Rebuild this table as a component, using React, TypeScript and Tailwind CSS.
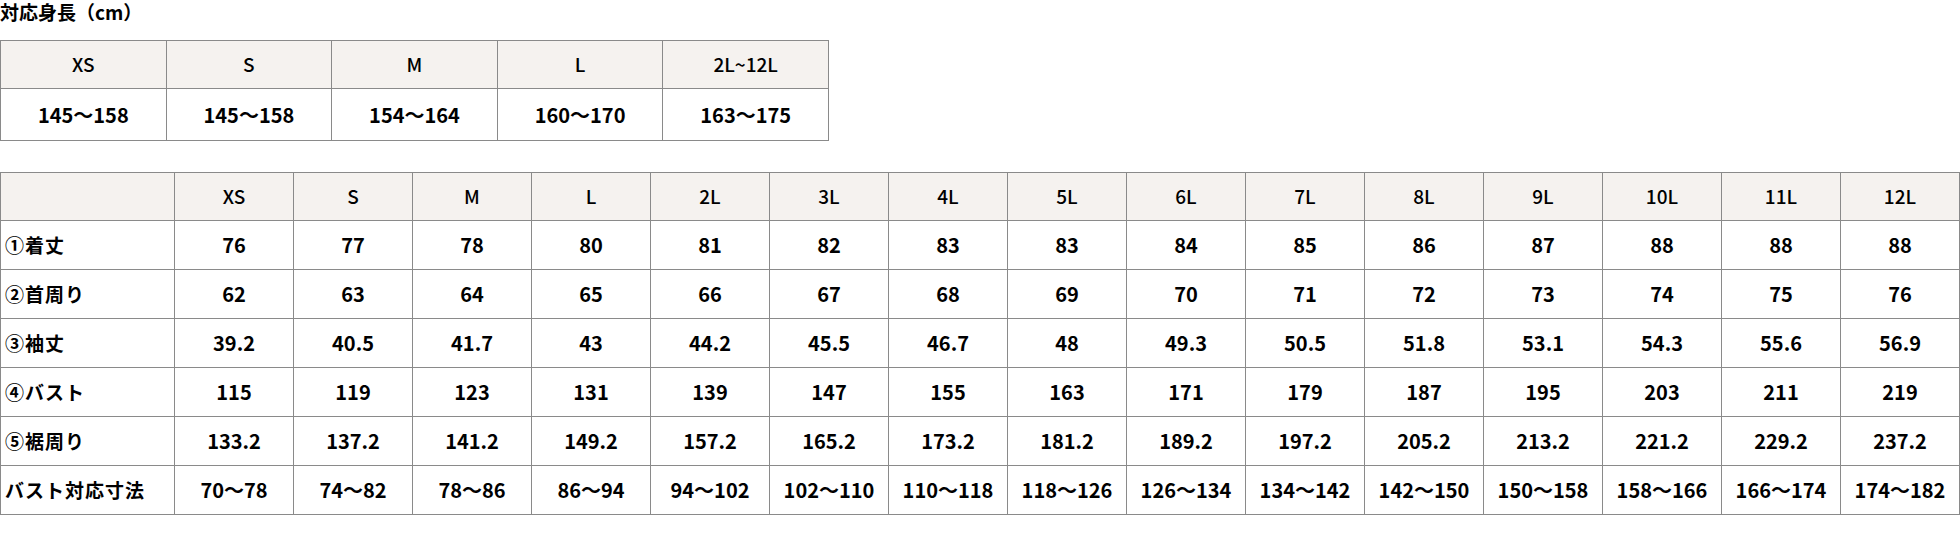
const heightSizes = ["XS", "S", "M", "L", "2L~12L"];
const heightRanges = ["145〜158", "145〜158", "154〜164", "160〜170", "163〜175"];

const sizes = ["XS", "S", "M", "L", "2L", "3L", "4L", "5L", "6L", "7L", "8L", "9L", "10L", "11L", "12L"];

const rows: { label: string; values: string[] }[] = [
    { label: "①着丈", values: ["76", "77", "78", "80", "81", "82", "83", "83", "84", "85", "86", "87", "88", "88", "88"] },
    { label: "②首周り", values: ["62", "63", "64", "65", "66", "67", "68", "69", "70", "71", "72", "73", "74", "75", "76"] },
    { label: "③袖丈", values: ["39.2", "40.5", "41.7", "43", "44.2", "45.5", "46.7", "48", "49.3", "50.5", "51.8", "53.1", "54.3", "55.6", "56.9"] },
    { label: "④バスト", values: ["115", "119", "123", "131", "139", "147", "155", "163", "171", "179", "187", "195", "203", "211", "219"] },
    { label: "⑤裾周り", values: ["133.2", "137.2", "141.2", "149.2", "157.2", "165.2", "173.2", "181.2", "189.2", "197.2", "205.2", "213.2", "221.2", "229.2", "237.2"] },
    { label: "バスト対応寸法", values: ["70〜78", "74〜82", "78〜86", "86〜94", "94〜102", "102〜110", "110〜118", "118〜126", "126〜134", "134〜142", "142〜150", "150〜158", "158〜166", "166〜174", "174〜182"] },
];

const font = "font-['Noto_Sans_CJK_JP','Noto_Sans',sans-serif]";

export default function App() {
    return (
        <div className={`w-[1960px] h-[540px] bg-white text-black ${font}`}>
            <div className="h-[24px] text-[19px] leading-[24px] font-bold">対応身長（cm）</div>

            <table className="mt-[16px] w-[829px] table-fixed border-collapse">
                <tbody>
                    <tr className="h-[48px] bg-[#f5f2ef]">
                        {heightSizes.map((s, i) => (
                            <td key={i} className="border border-[#8a8a8a] text-center text-[19px] font-medium">{s}</td>
                        ))}
                    </tr>
                    <tr className="h-[52px]">
                        {heightRanges.map((s, i) => (
                            <td key={i} className="border border-[#8a8a8a] text-center text-[20px] font-bold">{s}</td>
                        ))}
                    </tr>
                </tbody>
            </table>

            <table className="mt-[31px] w-[1960px] table-fixed border-collapse">
                <colgroup>
                    <col className="w-[174px]" />
                    {sizes.map(s => <col key={s} />)}
                </colgroup>
                <tbody>
                    <tr className="h-[48px] bg-[#f5f2ef]">
                        <td className="border border-[#8a8a8a]"></td>
                        {sizes.map(s => (
                            <td key={s} className="border border-[#8a8a8a] text-center text-[19px] font-medium">{s}</td>
                        ))}
                    </tr>
                    {rows.map(r => (
                        <tr key={r.label} className="h-[49px]">
                            <td className="border border-[#8a8a8a] pl-[4px] text-[19px] font-bold tracking-[1px]">{r.label}</td>
                            {r.values.map((v, i) => (
                                <td key={i} className="border border-[#8a8a8a] text-center text-[20px] font-bold">{v}</td>
                            ))}
                        </tr>
                    ))}
                </tbody>
            </table>
        </div>
    );
}
